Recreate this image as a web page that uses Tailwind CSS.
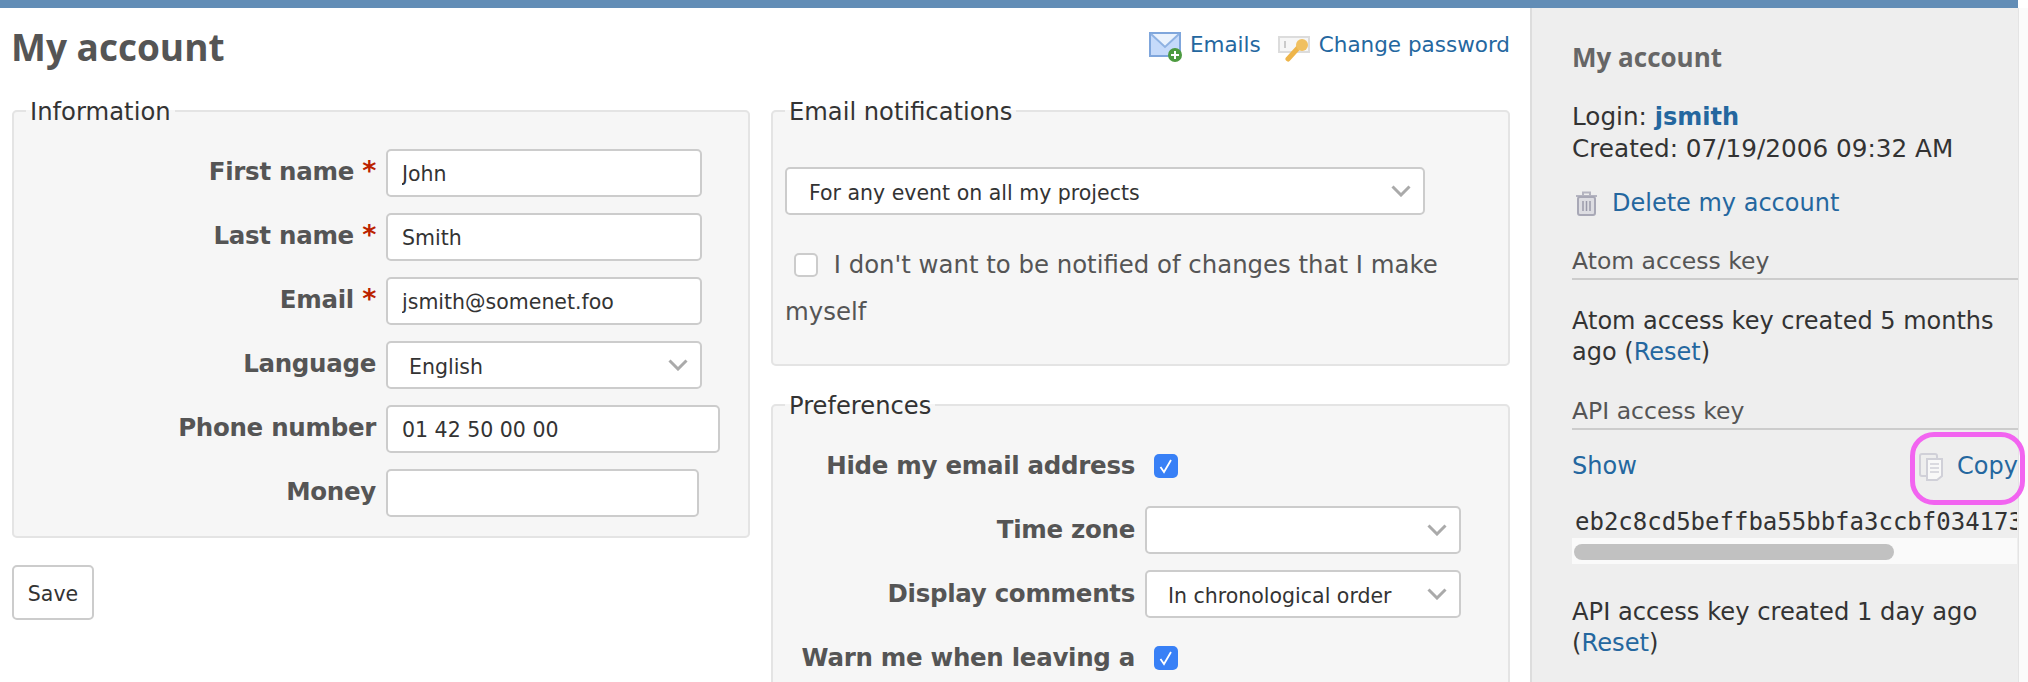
<!DOCTYPE html>
<html lang="en">
<head>
    <meta charset="UTF-8">
    <title>My account</title>
    <script src="https://cdn.jsdelivr.net/npm/@tailwindcss/browser@4"></script>
</head>
<body class="h-[682px] overflow-hidden bg-white text-[#333] font-['DejaVu_Sans',sans-serif] text-[24.7px]">
    <div class="h-2 w-[2018px] bg-[#628db6]"></div>

    <div class="flex h-[674px]">
        <!-- Main content -->
        <main class="w-[1530px] overflow-hidden pl-3 pr-5">
            <div class="flex h-[88px] justify-between">
                <h2 class="ml-[-1px] pt-[15px] font-['Open_Sans',sans-serif] text-[37px] leading-[48px] font-bold text-[#555]">My account</h2>
                <div class="mt-6 flex h-[30px] items-center text-[21.5px] text-[#24679f]">
                    <svg class="mr-2 ml-[2px] h-[30px] w-[33px]" viewBox="0 0 33 30">
                        <rect x="1" y="1" width="30" height="23" fill="#c5dafa" stroke="#7fa6dc" stroke-width="2"/>
                        <path d="M2 2l14 13L30 2" fill="#eaf2fd" stroke="#8fb2e2" stroke-width="2"/>
                        <circle cx="26" cy="23" r="7" fill="#4c9a3f"/>
                        <path d="M26 19v8M22 23h8" stroke="#fff" stroke-width="2"/>
                    </svg>
                    <a class="mb-[3px]">Emails</a>
                    <svg class="mr-2 ml-[17px] h-[30px] w-[33px]" viewBox="0 0 33 30">
                        <rect x="1" y="5" width="30" height="15" fill="#f6f6f6" stroke="#dcdcdc" stroke-width="2"/>
                        <path d="M7 9v7" stroke="#bbb" stroke-width="1.5"/>
                        <path d="M10 27l10-11" stroke="#eeb54a" stroke-width="5" stroke-linecap="round"/>
                        <circle cx="24" cy="13" r="6" fill="#f0c060"/>
                    </svg>
                    <a class="mb-[3px]">Change password</a>
                </div>
            </div>

            <div class="flex gap-[21px]">
                <!-- Left column -->
                <div class="w-[738px]">
                    <fieldset class="h-[442px] rounded-[5px] border-2 border-[#e4e4e4] bg-[#f6f6f6] pt-[23px]">
                        <legend class="ml-[12px] px-[4px] pt-[2px] text-[24.3px] leading-[28px]">Information</legend>
                        <div class="flex flex-col gap-4">
                            <div class="flex h-12 items-center">
                                <label class="w-[362px] pb-[3px] text-right text-[24.5px] leading-[30px] font-bold tracking-[-0.3px] text-[#555]">First name <span class="text-[27px] leading-none text-[#bb2200]">*</span></label>
                                <input class="ml-[10px] h-12 w-[316px] rounded-[5px] border-2 border-[#ccc] bg-white pt-[2px] pl-[14px] text-[20.5px] text-[#333]" value="John">
                            </div>
                            <div class="flex h-12 items-center">
                                <label class="w-[362px] pb-[3px] text-right text-[24.5px] leading-[30px] font-bold tracking-[-0.3px] text-[#555]">Last name <span class="text-[27px] leading-none text-[#bb2200]">*</span></label>
                                <input class="ml-[10px] h-12 w-[316px] rounded-[5px] border-2 border-[#ccc] bg-white pt-[2px] pl-[14px] text-[20.5px] text-[#333]" value="Smith">
                            </div>
                            <div class="flex h-12 items-center">
                                <label class="w-[362px] pb-[3px] text-right text-[24.5px] leading-[30px] font-bold tracking-[-0.3px] text-[#555]">Email <span class="text-[27px] leading-none text-[#bb2200]">*</span></label>
                                <input class="ml-[10px] h-12 w-[316px] rounded-[5px] border-2 border-[#ccc] bg-white pt-[2px] pl-[14px] text-[20.5px] text-[#333]" value="jsmith@somenet.foo">
                            </div>
                            <div class="flex h-12 items-center">
                                <label class="w-[362px] pb-[3px] text-right text-[24.5px] leading-[30px] font-bold tracking-[-0.3px] text-[#555]">Language</label>
                                <div class="relative ml-[10px] h-12 w-[316px]">
                                    <select class="h-12 w-full appearance-none rounded-[5px] border-2 border-[#ccc] bg-white pt-[4px] pl-[21px] text-[20.5px] text-[#333]"><option>English</option></select>
                                    <svg class="absolute top-[18px] right-[14px] h-3 w-5" viewBox="0 0 20 12"><path d="M1.500 1.500L10 10l8.500-8.500" fill="none" stroke="#aaa" stroke-width="3"/></svg>
                                </div>
                            </div>
                            <div class="flex h-12 items-center">
                                <label class="w-[362px] pb-[3px] text-right text-[24.5px] leading-[30px] font-bold tracking-[-0.3px] text-[#555]">Phone number</label>
                                <input class="ml-[10px] h-12 w-[334px] rounded-[5px] border-2 border-[#ccc] bg-white pt-[2px] pl-[14px] text-[20.5px] text-[#333]" value="01 42 50 00 00">
                            </div>
                            <div class="flex h-12 items-center">
                                <label class="w-[362px] pb-[3px] text-right text-[24.5px] leading-[30px] font-bold tracking-[-0.3px] text-[#555]">Money</label>
                                <input class="ml-[10px] h-12 w-[313px] rounded-[5px] border-2 border-[#ccc] bg-white pt-[2px] pl-[14px] text-[20.5px] text-[#333]">
                            </div>
                        </div>
                    </fieldset>
                    <button class="mt-[27px] h-[55px] w-[82px] rounded-[5px] border-2 border-[#ccc] bg-white pt-[3px] text-[20.5px] text-[#333]">Save</button>
                </div>

                <!-- Right column -->
                <div class="w-[739px]">
                    <fieldset class="mb-6 h-[270px] rounded-[5px] border-2 border-[#e4e4e4] bg-[#f6f6f6] pt-[41px] pl-[12px]">
                        <legend class="px-[4px] pt-[2px] text-[24.2px] leading-[28px]">Email notifications</legend>
                        <div class="relative h-12 w-[640px]">
                            <select class="h-12 w-full appearance-none rounded-[5px] border-2 border-[#ccc] bg-white pt-[4px] pl-[22px] text-[20.5px] text-[#333]"><option>For any event on all my projects</option></select>
                            <svg class="absolute top-[18px] right-[14px] h-3 w-5" viewBox="0 0 20 12"><path d="M1.500 1.500L10 10l8.500-8.500" fill="none" stroke="#aaa" stroke-width="3"/></svg>
                        </div>
                        <p class="mt-[26px] text-[24.4px] leading-[47px] text-[#555]">
                            <input type="checkbox" class="mr-[8px] ml-[9px] h-6 w-6 appearance-none rounded-[5px] border-2 border-[#ccc] bg-white align-[-4px]">
                            I don't want to be notified of changes that I make myself
                        </p>
                    </fieldset>

                    <fieldset class="h-[400px] rounded-[5px] border-2 border-[#e4e4e4] bg-[#f6f6f6] pt-[22px]">
                        <legend class="ml-[12px] px-[4px] pt-[2px] text-[24.2px] leading-[28px]">Preferences</legend>
                        <div class="flex flex-col gap-4">
                            <div class="flex h-12 items-center">
                                <label class="w-[362px] pb-[1px] text-right text-[24.5px] leading-[30px] font-bold tracking-[-0.3px] text-[#555]">Hide my email address</label>
                                <div class="relative ml-[19px] h-6 w-6 rounded-[5px] bg-[#3880f6]">
                                    <svg class="absolute top-[4px] left-[5px] h-4 w-[14px]" viewBox="0 0 14 16"><path d="M1.500 9l3.500 5L12 2" fill="none" stroke="#fff" stroke-width="1.800"/></svg>
                                </div>
                            </div>
                            <div class="flex h-12 items-center">
                                <label class="w-[362px] pb-[1px] text-right text-[24.5px] leading-[30px] font-bold tracking-[-0.3px] text-[#555]">Time zone</label>
                                <div class="relative ml-[10px] h-12 w-[316px]">
                                    <select class="h-12 w-full appearance-none rounded-[5px] border-2 border-[#ccc] bg-white pt-[4px] pl-[21px] text-[20.5px] text-[#333]"></select>
                                    <svg class="absolute top-[18px] right-[14px] h-3 w-5" viewBox="0 0 20 12"><path d="M1.500 1.500L10 10l8.500-8.500" fill="none" stroke="#aaa" stroke-width="3"/></svg>
                                </div>
                            </div>
                            <div class="flex h-12 items-center">
                                <label class="w-[362px] pb-[1px] text-right text-[24.5px] leading-[30px] font-bold tracking-[-0.3px] text-[#555]">Display comments</label>
                                <div class="relative ml-[10px] h-12 w-[316px]">
                                    <select class="h-12 w-full appearance-none rounded-[5px] border-2 border-[#ccc] bg-white pt-[4px] pl-[21px] text-[20.5px] text-[#333]"><option>In chronological order</option></select>
                                    <svg class="absolute top-[18px] right-[14px] h-3 w-5" viewBox="0 0 20 12"><path d="M1.500 1.500L10 10l8.500-8.500" fill="none" stroke="#aaa" stroke-width="3"/></svg>
                                </div>
                            </div>
                            <div class="flex h-12 items-center">
                                <label class="w-[362px] pb-[1px] text-right text-[24.5px] leading-[30px] font-bold tracking-[-0.3px] whitespace-nowrap text-[#555]">Warn me when leaving a</label>
                                <div class="relative ml-[19px] h-6 w-6 rounded-[5px] bg-[#3880f6]">
                                    <svg class="absolute top-[4px] left-[5px] h-4 w-[14px]" viewBox="0 0 14 16"><path d="M1.500 9l3.500 5L12 2" fill="none" stroke="#fff" stroke-width="1.800"/></svg>
                                </div>
                            </div>
                        </div>
                    </fieldset>
                </div>
            </div>
        </main>

        <!-- Sidebar -->
        <aside class="h-full w-[488px] border-l-2 border-[#ddd] bg-[#eeeeee] pl-[40px] leading-[31px]">
            <h3 class="mt-[31px] h-[37px] font-['Open_Sans',sans-serif] text-[26px] leading-[36px] font-bold text-[#666]">My account</h3>
            <p class="mt-[25px]">Login: <a class="text-[24px] font-bold text-[#24679f]">jsmith</a><br>Created: 07/19/2006 09:32 AM</p>
            <p class="mt-[24px] flex items-center text-[24px] text-[#24679f]">
                <svg class="mr-[14px] ml-[3px] h-[25px] w-[23px]" viewBox="0 0 23 25">
                    <path d="M1 5h21M8 4V1.500h7V4" fill="none" stroke="#b4b4c0" stroke-width="2"/>
                    <rect x="3" y="6" width="17" height="18" rx="2" fill="#dddde2" stroke="#a8a8b6" stroke-width="2"/>
                    <path d="M8 10v10M11.500 10v10M15 10v10" stroke="#9a9aaa" stroke-width="1.500"/>
                </svg>
                <a>Delete my account</a>
            </p>
            <h4 class="mt-[27px] h-[34px] border-b-2 border-[#ccc] text-[23.5px] text-[#555]">Atom access key</h4>
            <p class="mt-[26px] text-[24px]">Atom access key created 5 months ago (<a class="text-[#24679f]">Reset</a>)</p>
            <h4 class="mt-[28px] h-[34px] border-b-2 border-[#ccc] text-[23.5px] text-[#555]">API access key</h4>
            <div class="relative mt-[21px] flex items-center justify-between text-[24px] text-[#24679f]">
                <a>Show</a>
                <div class="flex items-center">
                    <svg class="mr-[12px] h-[28px] w-[26px]" viewBox="0 0 26 28">
                        <rect x="1" y="1" width="17" height="22" rx="2" fill="#eeeeee" stroke="#d0d0d8" stroke-width="2"/>
                        <path d="M8 6h15v17l-5 4H8z" fill="#f8f8f8" stroke="#d0d0d8" stroke-width="2"/>
                        <path d="M11 11h9M11 15h9M11 19h9" stroke="#d0d0d8" stroke-width="1.500"/>
                    </svg>
                    <a>Copy</a>
                </div>
                <div class="absolute top-[-19px] right-[-7px] h-[73px] w-[115px] rounded-[24px] border-[5px] border-[#f264f0]"></div>
            </div>
            <div class="mt-[25px] w-[445px] overflow-hidden pb-[1px] pl-[3px] font-['DejaVu_Sans_Mono',monospace] text-[24px] leading-[30px] whitespace-nowrap">eb2c8cd5beffba55bbfa3ccbf034173</div>
            <div class="h-[26px] w-[445px] bg-[#fafafa] px-[2px] py-[6px]">
                <div class="h-[16px] w-[320px] rounded-full bg-[#c1c1c1]"></div>
            </div>
            <p class="mt-[33px] text-[24.2px]">API access key created 1 day ago (<a class="text-[#24679f]">Reset</a>)</p>
        </aside>

        <div class="w-[10px] border-l border-[#e4e4e4] bg-[#fbfbfb]"></div>
    </div>
</body>
</html>
